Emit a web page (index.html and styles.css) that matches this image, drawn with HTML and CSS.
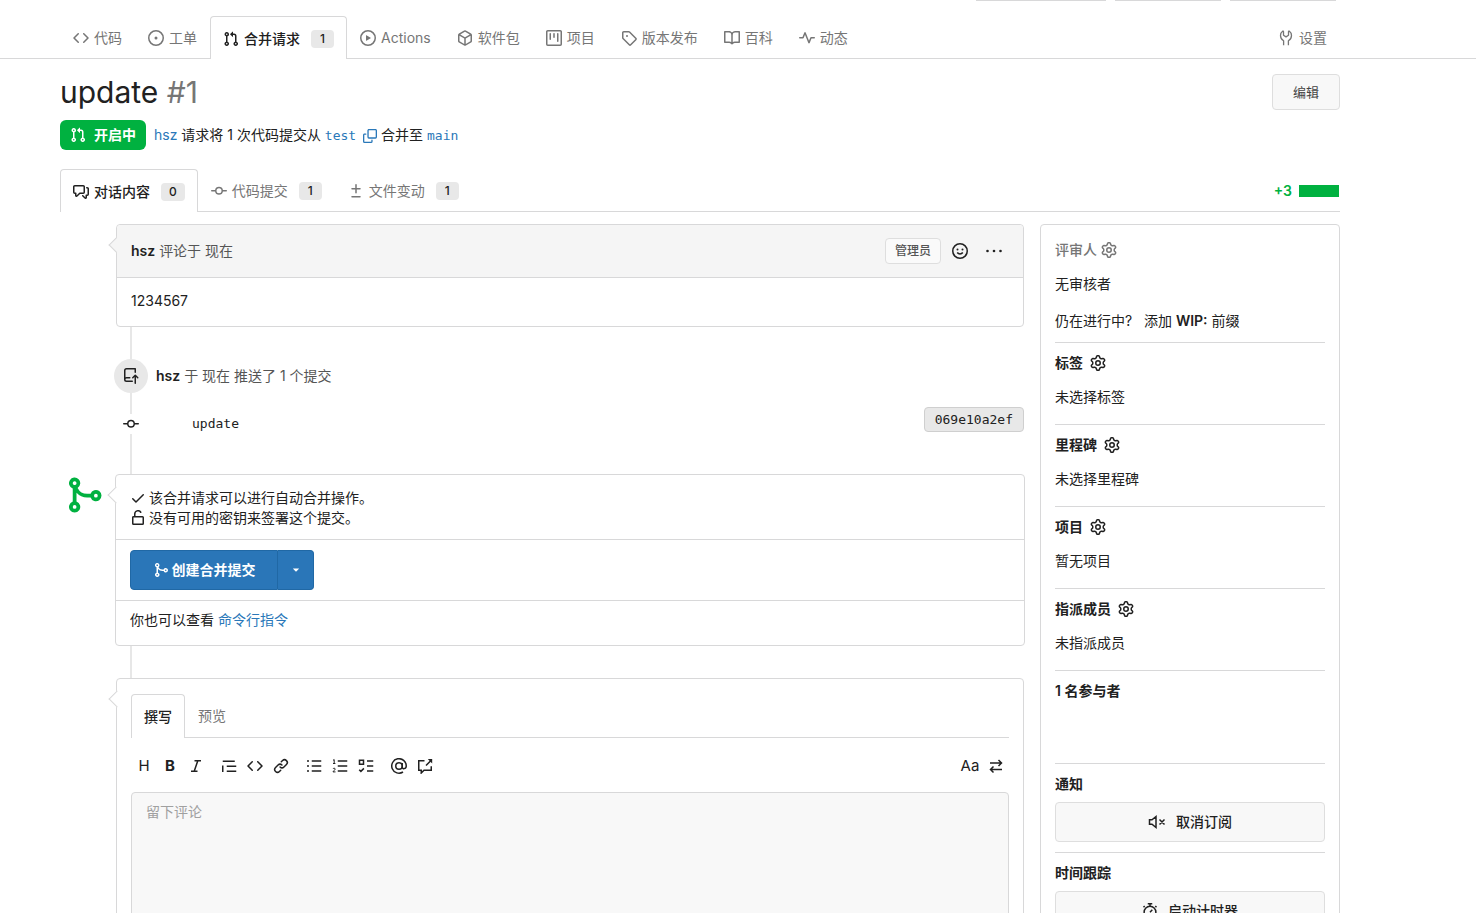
FILE: index.html
```html
<!DOCTYPE html>
<html lang="zh-CN">
<head>
<meta charset="utf-8">
<title>update #1</title>
<link rel="stylesheet" href="styles.css">
</head>
<body>
<svg class="sprite" aria-hidden="true">
  <symbol id="code" viewBox="0 0 16 16"><path d="m11.28 3.22 4.25 4.25a.75.75 0 0 1 0 1.06l-4.25 4.25a.749.749 0 0 1-1.275-.326.749.749 0 0 1 .215-.734L13.94 8l-3.72-3.72a.749.749 0 0 1 .326-1.275.749.749 0 0 1 .734.215Zm-6.56 0a.751.751 0 0 1 1.042.018.751.751 0 0 1 .018 1.042L2.06 8l3.72 3.72a.749.749 0 0 1-.326 1.275.749.749 0 0 1-.734-.215L.47 8.53a.75.75 0 0 1 0-1.06Z"/></symbol>
  <symbol id="issue" viewBox="0 0 16 16"><path d="M8 9.5a1.5 1.5 0 1 0 0-3 1.5 1.5 0 0 0 0 3Z"/><path d="M8 0a8 8 0 1 1 0 16A8 8 0 0 1 8 0ZM1.5 8a6.5 6.5 0 1 0 13 0 6.5 6.5 0 0 0-13 0Z"/></symbol>
  <symbol id="pull" viewBox="0 0 16 16"><path d="M1.5 3.25a2.25 2.25 0 1 1 3 2.122v5.256a2.251 2.251 0 1 1-1.5 0V5.372A2.25 2.25 0 0 1 1.5 3.25Zm5.677-.177L9.573.677A.25.25 0 0 1 10 .854V2.5h1A2.5 2.5 0 0 1 13.5 5v5.628a2.251 2.251 0 1 1-1.5 0V5a1 1 0 0 0-1-1h-1v1.646a.25.25 0 0 1-.427.177L7.177 3.427a.25.25 0 0 1 0-.354ZM3.75 2.5a.75.75 0 1 0 0 1.5.75.75 0 0 0 0-1.5Zm0 9.5a.75.75 0 1 0 0 1.5.75.75 0 0 0 0-1.5Zm8.25.75a.75.75 0 1 0 1.5 0 .75.75 0 0 0-1.5 0Z"/></symbol>
  <symbol id="play" viewBox="0 0 16 16"><path d="M8 0a8 8 0 1 1 0 16A8 8 0 0 1 8 0ZM1.5 8a6.5 6.5 0 1 0 13 0 6.5 6.5 0 0 0-13 0Zm4.879-2.773 4.264 2.559a.25.25 0 0 1 0 .428l-4.264 2.559A.25.25 0 0 1 6 10.559V5.442a.25.25 0 0 1 .379-.215Z"/></symbol>
  <symbol id="package" viewBox="0 0 16 16"><path d="m8.878.392 5.25 3.045c.54.314.872.89.872 1.514v6.098a1.75 1.75 0 0 1-.872 1.514l-5.25 3.045a1.75 1.75 0 0 1-1.756 0l-5.25-3.045A1.75 1.75 0 0 1 1 11.049V4.951c0-.624.332-1.201.872-1.514L7.122.392a1.75 1.75 0 0 1 1.756 0ZM7.875 1.69l-4.63 2.685L8 7.133l4.755-2.758-4.63-2.685a.248.248 0 0 0-.25 0ZM2.5 5.677v5.372c0 .09.047.171.125.216l4.625 2.683V8.432Zm6.25 8.271 4.625-2.683a.25.25 0 0 0 .125-.216V5.677L8.75 8.432Z"/></symbol>
  <symbol id="project" viewBox="0 0 16 16"><path d="M1.75 0h12.5C15.216 0 16 .784 16 1.75v12.5A1.75 1.75 0 0 1 14.25 16H1.75A1.75 1.75 0 0 1 0 14.25V1.75C0 .784.784 0 1.75 0ZM1.5 1.75v12.5c0 .138.112.25.25.25h12.5a.25.25 0 0 0 .25-.25V1.75a.25.25 0 0 0-.25-.25H1.75a.25.25 0 0 0-.25.25ZM11.75 3a.75.75 0 0 1 .75.75v7.5a.75.75 0 0 1-1.5 0v-7.5a.75.75 0 0 1 .75-.75Zm-8.25.75a.75.75 0 0 1 1.5 0v5.5a.75.75 0 0 1-1.5 0ZM8 3a.75.75 0 0 1 .75.75v3.5a.75.75 0 0 1-1.5 0v-3.5A.75.75 0 0 1 8 3Z"/></symbol>
  <symbol id="tag" viewBox="0 0 16 16"><path d="M1 7.775V2.75C1 1.784 1.784 1 2.75 1h5.025c.464 0 .91.184 1.238.513l6.25 6.25a1.75 1.75 0 0 1 0 2.474l-5.026 5.026a1.75 1.75 0 0 1-2.474 0l-6.25-6.25A1.752 1.752 0 0 1 1 7.775Zm1.5 0c0 .066.026.13.073.177l6.25 6.25a.25.25 0 0 0 .354 0l5.025-5.025a.25.25 0 0 0 0-.354l-6.25-6.25a.25.25 0 0 0-.177-.073H2.75a.25.25 0 0 0-.25.25ZM6 5a1 1 0 1 1 0 2 1 1 0 0 1 0-2Z"/></symbol>
  <symbol id="book" viewBox="0 0 16 16"><path d="M0 1.75A.75.75 0 0 1 .75 1h4.253c1.227 0 2.317.59 3 1.501A3.743 3.743 0 0 1 11.006 1h4.245a.75.75 0 0 1 .75.75v10.5a.75.75 0 0 1-.75.75h-4.507a2.25 2.25 0 0 0-1.591.659l-.622.621a.75.75 0 0 1-1.06 0l-.622-.621A2.25 2.25 0 0 0 5.258 13H.75a.75.75 0 0 1-.75-.75Zm7.251 10.324.004-5.073-.002-2.253A2.25 2.25 0 0 0 5.003 2.5H1.5v9h3.757a3.75 3.75 0 0 1 1.994.574ZM8.755 4.75l-.004 7.322a3.752 3.752 0 0 1 1.992-.572H14.5v-9h-3.495a2.25 2.25 0 0 0-2.25 2.25Z"/></symbol>
  <symbol id="pulse" viewBox="0 0 16 16"><path d="M6 2c.306 0 .582.187.696.471L10 10.731l1.304-3.26A.751.751 0 0 1 12 7h3.25a.75.75 0 0 1 0 1.5h-2.742l-1.812 4.528a.751.751 0 0 1-1.392 0L6 4.77 4.696 8.03A.75.75 0 0 1 4 8.5H.75a.75.75 0 0 1 0-1.5h2.742l1.812-4.529A.751.751 0 0 1 6 2Z"/></symbol>
  <symbol id="wrench" viewBox="0 0 16 16"><path class="line" d="M5.600 15.200v-4.400C3.600 9.700 2.500 7.900 2.500 5.600 2.500 3.700 3.400 2 4.600 1.200c.5-.2.9 0 .9.500v3.500L8 6.900l2.500-1.700V1.700c0-.5.4-.7.9-.5 1.200.8 2.100 2.500 2.100 4.400 0 2.300-1.100 4.100-3.100 5.200v4.400"/></symbol>
  <symbol id="discussion" viewBox="0 0 16 16"><path d="M1.750 1h8.500c.966 0 1.750.784 1.750 1.750v5.500A1.750 1.750 0 0 1 10.250 10H7.061l-2.574 2.573A1.458 1.458 0 0 1 2 11.543V10h-.25A1.750 1.750 0 0 1 0 8.250v-5.500C0 1.784.784 1 1.750 1ZM1.500 2.750v5.500c0 .138.112.25.25.25h1a.75.75 0 0 1 .75.75v2.190l2.720-2.720a.749.749 0 0 1 .53-.22h3.500a.25.25 0 0 0 .25-.25v-5.500a.25.25 0 0 0-.25-.25h-8.500a.25.25 0 0 0-.25.25Zm13 2a.25.25 0 0 0-.25-.25h-.5a.75.75 0 0 1 0-1.500h.5c.966 0 1.750.784 1.750 1.750v5.500A1.750 1.750 0 0 1 14.250 12H14v1.543a1.458 1.458 0 0 1-2.487 1.030L9.220 12.280a.749.749 0 0 1 .326-1.275.749.749 0 0 1 .734.215l2.220 2.220v-2.190a.75.75 0 0 1 .75-.75h1a.25.25 0 0 0 .25-.25Z"/></symbol>
  <symbol id="commit" viewBox="0 0 16 16"><path d="M11.93 8.5a4.002 4.002 0 0 1-7.86 0H.75a.75.75 0 0 1 0-1.5h3.320a4.002 4.002 0 0 1 7.860 0h3.320a.75.75 0 0 1 0 1.5Zm-1.430-.75a2.500 2.500 0 1 0-5 0 2.500 2.500 0 0 0 5 0Z"/></symbol>
  <symbol id="diff" viewBox="0 0 16 16"><path d="M8.75 1.75V5H12a.75.75 0 0 1 0 1.5H8.75v3.25a.75.75 0 0 1-1.5 0V6.5H4A.75.75 0 0 1 4 5h3.25V1.75a.75.75 0 0 1 1.5 0ZM4 13h8a.75.75 0 0 1 0 1.5H4A.75.75 0 0 1 4 13Z"/></symbol>
  <symbol id="copy" viewBox="0 0 16 16"><path d="M0 6.75C0 5.784.784 5 1.75 5h1.5a.75.75 0 0 1 0 1.5h-1.5a.25.25 0 0 0-.25.25v7.5c0 .138.112.25.25.25h7.5a.25.25 0 0 0 .25-.25v-1.5a.75.75 0 0 1 1.5 0v1.5A1.75 1.75 0 0 1 9.25 16h-7.5A1.75 1.75 0 0 1 0 14.25Z"/><path d="M5 1.75C5 .784 5.784 0 6.75 0h7.5C15.216 0 16 .784 16 1.75v7.5A1.75 1.75 0 0 1 14.25 11h-7.5A1.75 1.75 0 0 1 5 9.25Zm1.75-.25a.25.25 0 0 0-.25.25v7.5c0 .138.112.25.25.25h7.5a.25.25 0 0 0 .25-.25v-7.5a.25.25 0 0 0-.25-.25Z"/></symbol>
  <symbol id="smiley" viewBox="0 0 16 16"><circle class="stroke" cx="8" cy="8" r="7.250"/><circle cx="5.500" cy="6.500" r="1"/><circle cx="10.500" cy="6.500" r="1"/><path class="stroke" d="M5.200 9.500a3.400 3.400 0 0 0 5.600 0"/></symbol>
  <symbol id="dots" viewBox="0 0 16 16"><circle cx="1.500" cy="8" r="1.300"/><circle cx="8" cy="8" r="1.300"/><circle cx="14.500" cy="8" r="1.300"/></symbol>
  <symbol id="push" viewBox="0 0 16 16"><path d="M1 2.500A2.500 2.500 0 0 1 3.500 0h8.750a.75.75 0 0 1 .75.75v3.500a.75.75 0 0 1-1.500 0V1.500h-8a1 1 0 0 0-1 1v6.708A2.493 2.493 0 0 1 3.500 9h3.250a.75.75 0 0 1 0 1.500H3.500a1 1 0 0 0 0 2h5.750a.75.75 0 0 1 0 1.500H3.500A2.500 2.500 0 0 1 1 11.500Zm13.230 7.790h-.001l-1.224-1.224v6.184a.75.75 0 0 1-1.500 0V9.066L10.280 10.290a.75.75 0 0 1-1.060-1.061l2.505-2.504a.75.75 0 0 1 1.060 0L15.290 9.230a.751.751 0 0 1-.018 1.042.751.751 0 0 1-1.042.018Z"/></symbol>
  <symbol id="merge" viewBox="0 0 16 16"><path d="M5.450 5.154A4.250 4.250 0 0 0 9.250 7.500h1.378a2.251 2.251 0 1 1 0 1.500H9.250A5.734 5.734 0 0 1 5 7.123v3.505a2.250 2.250 0 1 1-1.500 0V5.372a2.250 2.250 0 1 1 1.950-.218ZM4.250 13.500a.75.75 0 1 0 0-1.500.75.75 0 0 0 0 1.500Zm8.500-4.500a.75.75 0 1 0 0-1.500.75.75 0 0 0 0 1.500ZM5 3.250a.75.75 0 1 0 0 .005V3.250Z"/></symbol>
  <symbol id="check" viewBox="0 0 16 16"><path d="M13.780 4.220a.75.75 0 0 1 0 1.060l-7.250 7.250a.75.75 0 0 1-1.060 0L2.220 9.280a.751.751 0 0 1 .018-1.042.751.751 0 0 1 1.042-.018L6 10.940l6.720-6.720a.75.75 0 0 1 1.060 0Z"/></symbol>
  <symbol id="unlock" viewBox="0 0 16 16"><path d="M5.500 4v2h7A1.500 1.500 0 0 1 14 7.500v6a1.500 1.500 0 0 1-1.500 1.500h-9A1.500 1.500 0 0 1 2 13.500v-6A1.499 1.499 0 0 1 3.499 6H4V4a4 4 0 0 1 7.371-2.154.75.75 0 0 1-1.264.808A2.500 2.500 0 0 0 5.500 4Zm-2 3.500v6h9v-6h-9Z"/></symbol>
  <symbol id="gear" viewBox="0 0 16 16"><path d="M8 0a8.2 8.2 0 0 1 .701.031C9.444.095 9.99.645 10.16 1.29l.288 1.107c.018.066.079.158.212.224.231.114.454.243.668.386.123.082.233.09.299.071l1.103-.303c.644-.176 1.392.021 1.82.63.27.385.506.792.704 1.218.315.675.111 1.422-.364 1.891l-.814.806c-.049.048-.098.147-.088.294.016.257.016.515 0 .772-.01.147.038.246.088.294l.814.806c.475.469.679 1.216.364 1.891a7.977 7.977 0 0 1-.704 1.217c-.428.61-1.176.807-1.82.63l-1.102-.302c-.067-.019-.177-.011-.3.071a5.909 5.909 0 0 1-.668.386c-.133.066-.194.158-.211.224l-.29 1.106c-.168.646-.715 1.196-1.458 1.26a8.006 8.006 0 0 1-1.402 0c-.743-.064-1.289-.614-1.458-1.26l-.289-1.106c-.018-.066-.079-.158-.212-.224a5.738 5.738 0 0 1-.668-.386c-.123-.082-.233-.09-.299-.071l-1.103.303c-.644.176-1.392-.021-1.82-.63a8.12 8.12 0 0 1-.704-1.218c-.315-.675-.111-1.422.363-1.891l.815-.806c.05-.048.098-.147.088-.294a6.214 6.214 0 0 1 0-.772c.01-.147-.038-.246-.088-.294l-.815-.806C.635 6.045.431 5.298.746 4.623a7.92 7.92 0 0 1 .704-1.217c.428-.61 1.176-.807 1.82-.63l1.102.302c.067.019.177.011.3-.071.214-.143.437-.272.668-.386.133-.066.194-.158.211-.224l.29-1.106C6.009.645 6.556.095 7.299.03 7.53.01 7.764 0 8 0Zm-.571 1.525c-.036.003-.108.036-.137.146l-.289 1.105c-.147.561-.549.967-.998 1.189-.173.086-.34.183-.5.29-.417.278-.97.423-1.529.27l-1.103-.303c-.109-.03-.175.016-.195.045-.22.312-.412.644-.573.99-.014.031-.021.11.059.19l.815.806c.411.406.562.957.53 1.456a4.709 4.709 0 0 0 0 .582c.032.499-.119 1.05-.53 1.456l-.815.806c-.081.08-.073.159-.059.19.162.346.353.677.573.989.02.03.085.076.195.046l1.102-.303c.56-.153 1.113-.008 1.53.27.161.107.328.204.501.29.447.222.85.629.997 1.189l.289 1.105c.029.109.101.143.137.146a6.6 6.6 0 0 0 1.142 0c.036-.003.108-.036.137-.146l.289-1.105c.147-.561.549-.967.998-1.189.173-.086.34-.183.5-.29.417-.278.97-.423 1.529-.27l1.103.303c.109.029.175-.016.195-.045.22-.313.411-.644.573-.99.014-.031.021-.11-.059-.19l-.815-.806c-.411-.406-.562-.957-.53-1.456a4.709 4.709 0 0 0 0-.582c-.032-.499.119-1.05.53-1.456l.815-.806c.081-.08.073-.159.059-.19a6.464 6.464 0 0 0-.573-.989c-.02-.03-.085-.076-.195-.046l-1.102.303c-.56.153-1.113.008-1.53-.27a4.44 4.44 0 0 0-.501-.29c-.447-.222-.85-.629-.997-1.189l-.289-1.105c-.029-.11-.101-.143-.137-.146a6.6 6.6 0 0 0-1.142 0ZM11 8a3 3 0 1 1-6 0 3 3 0 0 1 6 0ZM9.5 8a1.5 1.5 0 1 0-3.001.001A1.5 1.5 0 0 0 9.5 8Z"/></symbol>
  <symbol id="caret" viewBox="0 0 16 16"><path d="M3 5.500h10L8.500 10.300a.7.7 0 0 1-1 0Z"/></symbol>
  <symbol id="italic" viewBox="0 0 16 16"><path class="stroke" d="M6.500 2.750h6.500M3 13.250h6.500M9.800 2.750 6.200 13.250"/></symbol>
  <symbol id="quote" viewBox="0 0 16 16"><path class="stroke" d="M1.750 3.250h12M5.750 8.250h9.500M5.750 13.250h9.500M1.750 7.500v6.500"/></symbol>
  <symbol id="link" viewBox="0 0 16 16"><path d="m7.775 3.275 1.250-1.250a3.500 3.500 0 1 1 4.950 4.950l-2.500 2.500a3.500 3.500 0 0 1-4.950 0 .751.751 0 0 1 .018-1.042.751.751 0 0 1 1.042-.018 1.998 1.998 0 0 0 2.830 0l2.500-2.500a2.002 2.002 0 0 0-2.830-2.830l-1.250 1.250a.751.751 0 0 1-1.042-.018.751.751 0 0 1-.018-1.042Zm-4.690 9.640a1.998 1.998 0 0 0 2.830 0l1.250-1.250a.751.751 0 0 1 1.042.018.751.751 0 0 1 .018 1.042l-1.250 1.250a3.500 3.500 0 1 1-4.950-4.950l2.500-2.500a3.500 3.500 0 0 1 4.950 0 .751.751 0 0 1-.018 1.042.751.751 0 0 1-1.042.018 1.998 1.998 0 0 0-2.830 0l-2.500 2.500a1.998 1.998 0 0 0 0 2.830Z"/></symbol>
  <symbol id="ul" viewBox="0 0 16 16"><path class="stroke" d="M5.750 3h9.500M5.750 8h9.500M5.750 13h9.500"/><circle cx="2" cy="3" r="1"/><circle cx="2" cy="8" r="1"/><circle cx="2" cy="13" r="1"/></symbol>
  <symbol id="ol" viewBox="0 0 16 16"><path class="stroke" d="M5.750 3h9.500M5.750 8h9.500M5.750 13h9.500"/><path class="thin" d="M1 2.300 2.200 1.600V5.500M1 5.500h2.400M1 10.900c.3-1 2.300-.9 2.200.3C3.100 12.200 1 12.800 1 13.900h2.500"/></symbol>
  <symbol id="tasks" viewBox="0 0 16 16"><path class="stroke" d="M9 3h6.250M9 8h6.250M9 13h6.250M1.500 2.250h4v4h-4zM1.200 11.700l1.700 1.700 3-3"/></symbol>
  <symbol id="mention" viewBox="0 0 16 16"><circle class="stroke" cx="8" cy="8" r="3.250"/><path class="stroke" d="M11.250 5v3.900c0 2.600 4 2.300 4-.9A7.250 7.250 0 1 0 12 14"/></symbol>
  <symbol id="crossref" viewBox="0 0 16 16"><path class="stroke" d="M7.500 2.750H1.750v9.500h2.500V15L7 12.250h7.250V8.250M9 7.500l5-5"/><path d="M10.800 1H15.200v4.400Z"/></symbol>
  <symbol id="swap" viewBox="0 0 16 16"><path class="stroke" d="M2 5h11.500M10.500 2l3 3-3 3M14 11.500H2.500M5.500 8.500l-3 3 3 3"/></symbol>
  <symbol id="mute" viewBox="0 0 18 16"><path class="stroke" d="M1.500 5.750h2.500L8 2.500v11L4 10.250H1.500ZM11.500 5.500l5 5M16.500 5.500l-5 5"/></symbol>
  <symbol id="timer" viewBox="0 0 16 16"><circle class="stroke" cx="8" cy="9.250" r="5.900"/><path class="stroke" d="M5.750.750h4.500M8 .75v2.500M8 9.250l2.300-2.500M13.300 3l1.200 1.200M2.700 3 1.500 4.200"/></symbol>
</svg>

<div class="repo-actions" aria-hidden="true"><span class="action-edge wide"></span><span class="action-edge"></span><span class="action-edge"></span></div>

<nav class="repo-nav" aria-label="仓库">
  <a class="tab" href="#"><svg class="icon"><use href="#code"/></svg>代码</a>
  <a class="tab" href="#"><svg class="icon"><use href="#issue"/></svg>工单</a>
  <a class="tab active" href="#"><svg class="icon"><use href="#pull"/></svg>合并请求<span class="count">1</span></a>
  <a class="tab" href="#"><svg class="icon"><use href="#play"/></svg>Actions</a>
  <a class="tab" href="#"><svg class="icon"><use href="#package"/></svg>软件包</a>
  <a class="tab" href="#"><svg class="icon"><use href="#project"/></svg>项目</a>
  <a class="tab" href="#"><svg class="icon"><use href="#tag"/></svg>版本发布</a>
  <a class="tab" href="#"><svg class="icon"><use href="#book"/></svg>百科</a>
  <a class="tab" href="#"><svg class="icon"><use href="#pulse"/></svg>动态</a>
  <a class="tab push-right" href="#"><svg class="icon"><use href="#wrench"/></svg>设置</a>
</nav>

<main class="page">
  <header class="title-row">
    <h1>update <span class="number">#1</span></h1>
    <button class="btn small" type="button">编辑</button>
  </header>
  <div class="summary">
    <span class="state"><svg class="icon"><use href="#pull"/></svg>开启中</span>
    <p class="summary-text"><a href="#">hsz</a> 请求将 1 次代码提交从 <a class="mono" href="#">test</a> <button class="copy" type="button" aria-label="复制"><svg class="icon"><use href="#copy"/></svg></button> 合并至 <a class="mono" href="#">main</a></p>
  </div>
  <nav class="pull-tabs" aria-label="合并请求">
    <a class="tab active" href="#"><svg class="icon"><use href="#discussion"/></svg>对话内容<span class="count">0</span></a>
    <a class="tab" href="#"><svg class="icon"><use href="#commit"/></svg>代码提交<span class="count">1</span></a>
    <a class="tab" href="#"><svg class="icon"><use href="#diff"/></svg>文件变动<span class="count">1</span></a>
    <span class="diffstat push-right">+3<span class="diffbar"></span></span>
  </nav>

  <div class="columns">
    <section class="timeline">
      <article class="box comment">
        <header class="comment-head">
          <span><a class="author" href="#">hsz</a> 评论于 现在</span>
          <span class="role">管理员</span>
          <button class="icon-btn" type="button" aria-label="添加表情"><svg class="icon"><use href="#smiley"/></svg></button>
          <button class="icon-btn" type="button" aria-label="更多"><svg class="icon"><use href="#dots"/></svg></button>
        </header>
        <p class="comment-body">1234567</p>
      </article>

      <div class="event">
        <span class="event-badge"><svg class="icon"><use href="#push"/></svg></span>
        <span><a class="author" href="#">hsz</a> 于 现在 推送了 1 个提交</span>
      </div>
      <div class="commit-row">
        <span class="commit-dot"><svg class="icon"><use href="#commit"/></svg></span>
        <a class="commit-msg" href="#">update</a>
        <a class="sha" href="#">069e10a2ef</a>
      </div>

      <div class="merge">
        <svg class="merge-icon" aria-hidden="true"><use href="#merge"/></svg>
        <div class="box merge-box">
          <div class="merge-status">
            <p><svg class="icon"><use href="#check"/></svg>该合并请求可以进行自动合并操作。</p>
            <p><svg class="icon"><use href="#unlock"/></svg>没有可用的密钥来签署这个提交。</p>
          </div>
          <div class="merge-action">
            <div class="split">
              <button class="split-main" type="button"><svg class="icon"><use href="#merge"/></svg>创建合并提交</button>
              <button class="split-more" type="button" aria-label="合并方式"><svg class="icon caret"><use href="#caret"/></svg></button>
            </div>
          </div>
          <p class="merge-hint">你也可以查看 <a href="#">命令行指令</a></p>
        </div>
      </div>

      <form class="box editor">
        <div class="editor-tabs">
          <button class="tab active" type="button">撰写</button>
          <button class="tab" type="button">预览</button>
        </div>
        <div class="toolbar">
          <div class="tools">
            <button class="tool letter" type="button" aria-label="标题">H</button>
            <button class="tool letter strong" type="button" aria-label="粗体">B</button>
            <button class="tool" type="button" aria-label="斜体"><svg class="icon"><use href="#italic"/></svg></button>
          </div>
          <div class="tools">
            <button class="tool" type="button" aria-label="引用"><svg class="icon"><use href="#quote"/></svg></button>
            <button class="tool" type="button" aria-label="代码"><svg class="icon"><use href="#code"/></svg></button>
            <button class="tool" type="button" aria-label="链接"><svg class="icon"><use href="#link"/></svg></button>
          </div>
          <div class="tools">
            <button class="tool" type="button" aria-label="无序列表"><svg class="icon"><use href="#ul"/></svg></button>
            <button class="tool" type="button" aria-label="有序列表"><svg class="icon"><use href="#ol"/></svg></button>
            <button class="tool" type="button" aria-label="任务列表"><svg class="icon"><use href="#tasks"/></svg></button>
          </div>
          <div class="tools">
            <button class="tool" type="button" aria-label="提及"><svg class="icon"><use href="#mention"/></svg></button>
            <button class="tool" type="button" aria-label="引用工单"><svg class="icon"><use href="#crossref"/></svg></button>
          </div>
          <div class="tools push-right">
            <button class="tool letter" type="button" aria-label="等宽字体">Aa</button>
            <button class="tool" type="button" aria-label="切换编辑器"><svg class="icon swap"><use href="#swap"/></svg></button>
          </div>
        </div>
        <textarea aria-label="留下评论" placeholder="留下评论"></textarea>
      </form>
    </section>

    <aside class="box sidebar">
      <section>
        <h2 class="muted tight">评审人<svg class="icon"><use href="#gear"/></svg></h2>
        <p>无审核者</p>
        <p class="wip">仍在进行中? &nbsp; <a href="#">添加 <strong>WIP:</strong> 前缀</a></p>
      </section>
      <section><h2>标签<svg class="icon"><use href="#gear"/></svg></h2><p>未选择标签</p></section>
      <section><h2>里程碑<svg class="icon"><use href="#gear"/></svg></h2><p>未选择里程碑</p></section>
      <section><h2>项目<svg class="icon"><use href="#gear"/></svg></h2><p>暂无项目</p></section>
      <section><h2>指派成员<svg class="icon"><use href="#gear"/></svg></h2><p>未指派成员</p></section>
      <section class="participants"><h2>1 名参与者</h2></section>
      <section class="action"><h2>通知</h2><button class="btn block" type="button"><svg class="icon wide-icon"><use href="#mute"/></svg>取消订阅</button></section>
      <section class="action"><h2>时间跟踪</h2><button class="btn block" type="button"><svg class="icon"><use href="#timer"/></svg>启动计时器</button></section>
    </aside>
  </div>
</main>
</body>
</html>
```
FILE: styles.css
```css
:root {
  --text: #212121;
  --soft: #555;
  --muted: #767676;
  --line: #d8d8d9;
  --rail: #e7e7e7;
  --link: #2a78b9;
  --green: #00b140;
  --blue: #2a76b8;
  --gutter-left: 60px;
  --gutter-right: 136px;
  --sans: Inter, "Noto Sans CJK SC", sans-serif;
  --mono: "DejaVu Sans Mono", "Noto Sans CJK SC", monospace;
}

* { box-sizing: border-box; }
html { scrollbar-width: none; }
body {
  margin: 0;
  background: #fff;
  color: var(--text);
  font: 14px/20px var(--sans);
}
h1, h2, p { margin: 0; font-weight: 400; }
a { color: var(--link); text-decoration: none; }
button { font: inherit; color: inherit; cursor: pointer; }
strong { font-weight: 600; }

.sprite { position: absolute; width: 0; height: 0; }
.icon { width: 16px; height: 16px; flex: none; fill: currentColor; }
.wide-icon { width: 18px; }
.stroke { fill: none; stroke: currentColor; stroke-width: 1.5; }
.line { fill: none; stroke: currentColor; stroke-width: 1.3; stroke-linejoin: round; }
.thin { fill: none; stroke: currentColor; stroke-width: 1; }
.push-right { margin-left: auto; }

.repo-actions {
  display: flex;
  justify-content: flex-end;
  gap: 9px;
  height: 16px;
  padding-right: 140px;
}
.action-edge { width: 106px; height: 1px; background: var(--line); }
.action-edge.wide { width: 130px; }

.repo-nav, .pull-tabs, .editor-tabs {
  display: flex;
  align-items: flex-end;
  border-bottom: 1px solid var(--line);
}
.repo-nav { padding: 0 var(--gutter-right) 0 var(--gutter-left); }
.tab {
  display: flex;
  align-items: center;
  gap: 5px;
  height: 42px;
  padding: 2px 13px 0;
  border: 0;
  background: none;
  color: var(--muted);
  white-space: nowrap;
}
.tab.active {
  height: 43px;
  margin-bottom: -1px;
  padding: 2px 12px 0;
  border: 1px solid var(--line);
  border-bottom: 0;
  border-radius: 4px 4px 0 0;
  background: #fff;
  color: var(--text);
  font-weight: 500;
}
.count {
  min-width: 23px;
  margin-left: 6px;
  padding: 0 8px;
  border-radius: 4px;
  background: #e8e8e8;
  color: var(--text);
  font-size: 12px;
  font-weight: 500;
  line-height: 18px;
  text-align: center;
}

.page { padding: 15px var(--gutter-right) 32px var(--gutter-left); }
.title-row { display: flex; justify-content: space-between; align-items: center; }
h1 { font-size: 30px; line-height: 36px; }
.number { color: var(--muted); }
.btn {
  display: flex;
  align-items: center;
  justify-content: center;
  gap: 10px;
  border: 1px solid #dedede;
  border-radius: 4px;
  background: #f8f8f8;
}
.btn.small { height: 36px; padding: 0 20px; color: #444; font-size: 13px; }
.btn.block { width: 100%; height: 40px; font-weight: 500; }

.summary { display: flex; align-items: center; gap: 8px; margin-top: 10px; }
.state {
  display: flex;
  align-items: center;
  gap: 8px;
  height: 30px;
  padding: 0 10px;
  border-radius: 6px;
  background: var(--green);
  color: #fff;
  font-weight: 600;
}
.mono { font-family: var(--mono); font-size: 13px; }
.copy { margin-left: 3px; padding: 0; border: 0; background: none; color: var(--link); vertical-align: middle; }
.copy .icon { display: block; width: 14px; height: 14px; }

.pull-tabs { margin-top: 19px; }
.diffstat {
  display: flex;
  align-items: center;
  gap: 7px;
  height: 40px;
  padding-right: 1px;
  color: var(--green);
  font-weight: 600;
}
.diffbar { width: 40px; height: 12px; background: var(--green); }

.columns {
  display: grid;
  grid-template-columns: minmax(0, 1fr) 300px;
  gap: 16px;
  align-items: start;
  margin-top: 12px;
}
.box { border: 1px solid var(--line); border-radius: 4px; background: #fff; }

.timeline { position: relative; padding-left: 56px; }
.timeline::before {
  content: "";
  position: absolute;
  z-index: -1;
  top: 0;
  bottom: 0;
  left: 70px;
  width: 2px;
  background: var(--rail);
}
.comment, .merge-box, .editor { position: relative; }
.comment::before, .merge-box::before, .editor::before {
  content: "";
  position: absolute;
  top: 14px;
  left: -6px;
  width: 11px;
  height: 11px;
  border: solid var(--line);
  border-width: 0 0 1px 1px;
  background: inherit;
  transform: rotate(45deg);
}
.comment::before { background: #f5f5f5; }
.comment-head {
  position: relative;
  display: flex;
  align-items: center;
  gap: 10px;
  height: 53px;
  padding: 0 14px;
  border-bottom: 1px solid var(--line);
  border-radius: 4px 4px 0 0;
  background: #f5f5f5;
  color: var(--soft);
}
.author { color: var(--text); font-weight: 600; }
.role {
  margin-left: auto;
  padding: 0 9px;
  border: 1px solid #dedede;
  border-radius: 4px;
  background: #fafafa;
  font-size: 12px;
  font-weight: 500;
  line-height: 24px;
}
.icon-btn { display: flex; padding: 1px; border: 0; background: none; color: var(--text); }
.icon-btn + .icon-btn { margin: 0 6px; }
.comment-body { padding: 13px 14px 15px; }

.event { display: flex; align-items: center; gap: 8px; margin: 32px 0 14px -2px; color: var(--soft); }
.event-badge {
  display: flex;
  align-items: center;
  justify-content: center;
  width: 34px;
  height: 34px;
  border-radius: 50%;
  background: #e8e8e8;
  color: var(--text);
}
.commit-row { display: flex; align-items: center; height: 34px; padding-left: 7px; }
.commit-dot { display: flex; padding: 2px 0; background: #fff; }
.commit-msg { margin-left: 53px; color: var(--text); font: 13px/20px var(--mono); }
.sha {
  align-self: flex-start;
  margin-left: auto;
  padding: 0 10px;
  border: 1px solid #cfcfcf;
  border-radius: 4px;
  background: #e8e8e8;
  color: var(--text);
  font: 13px/23px var(--mono);
}

.merge { position: relative; margin: 33px -1px 32px; }
.merge-icon {
  position: absolute;
  top: 1px;
  left: -51px;
  width: 40px;
  height: 40px;
  fill: var(--green);
}
.merge-status { padding: 13px 14px 11px; }
.merge-status p { display: flex; align-items: center; gap: 3px; }
.merge-action { padding: 10px 14px; border: solid var(--line); border-width: 1px 0; }
.split { display: flex; height: 40px; color: #fff; }
.split button {
  display: flex;
  align-items: center;
  justify-content: center;
  border: 1px solid #2068a5;
  background: var(--blue);
  font-weight: 600;
}
.split .split-main { gap: 3px; width: 148px; border-radius: 4px 0 0 4px; }
.split .split-more { width: 36px; border-left: 0; border-radius: 0 4px 4px 0; }
.caret { width: 10px; height: 10px; }
.merge-hint { padding: 9px 14px 15px; }

.editor { padding: 15px 14px 14px; }
.editor-tabs .tab { padding: 0 13px; }
.editor-tabs .tab.active { height: 44px; padding: 0 12px; }
.toolbar { display: flex; align-items: center; gap: 9px; height: 54px; padding: 2px 1px 0; }
.tools { display: flex; gap: 2px; }
.tool {
  display: flex;
  align-items: center;
  justify-content: center;
  min-width: 24px;
  height: 24px;
  padding: 0 2px;
  border: 0;
  background: none;
}
.letter { font-size: 15px; }
.letter.strong { font-weight: 700; }
textarea {
  display: block;
  width: 100%;
  height: 200px;
  padding: 9px 14px;
  border: 1px solid var(--line);
  border-radius: 4px;
  background: #f8f8f8;
  font: inherit;
  resize: none;
}
textarea::placeholder { color: #a0a0a0; }

.sidebar { padding: 5px 14px 14px; }
.sidebar section { padding: 10px 0 17px; }
.sidebar section:first-child { padding-bottom: 11px; }
.sidebar section + section { border-top: 1px solid var(--line); }
.sidebar h2 { display: flex; align-items: center; gap: 7px; font-size: 14px; font-weight: 600; line-height: 20px; }
.sidebar h2.muted { color: var(--muted); font-weight: 500; }
.sidebar h2.tight { gap: 4px; }
.sidebar p { margin-top: 14px; }
.sidebar .wip { margin-top: 17px; }
.wip a { color: var(--text); }
.sidebar .participants { min-height: 93px; }
.sidebar .action { padding-bottom: 10px; }
.action .btn { margin-top: 8px; }
```
